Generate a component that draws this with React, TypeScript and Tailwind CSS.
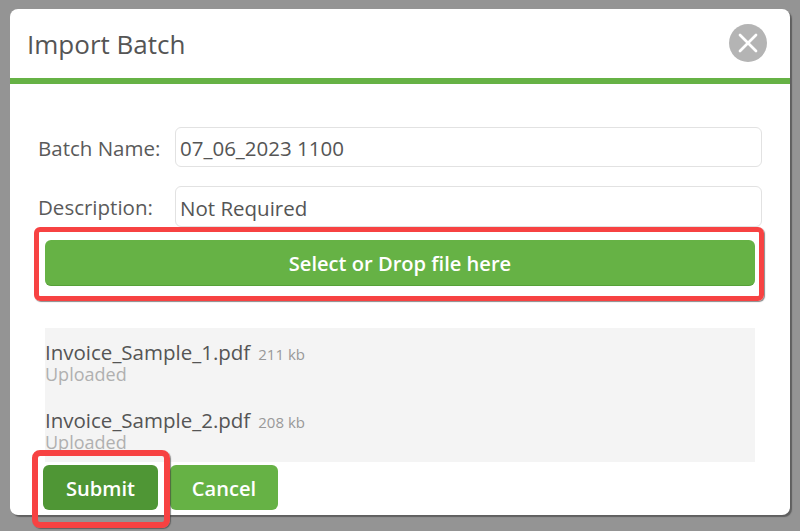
import { X } from "lucide-react";

const files = [
  { name: "Invoice_Sample_1.pdf", size: "211 kb" },
  { name: "Invoice_Sample_2.pdf", size: "208 kb" },
];

const fields = [
  { label: "Batch Name:", value: "07_06_2023 1100", height: "h-[40px]" },
  { label: "Description:", value: "Not Required", height: "h-[41px]" },
];

export default function App() {
  return (
    <main className="relative h-[531px] w-[800px] overflow-hidden bg-[#949494] px-[10px] pt-[9px] font-['Open_Sans',sans-serif] text-[#555555]">
      <div className="h-[506px] w-[780px] rounded-lg bg-white shadow-[2px_2px_1px_rgba(60,60,60,0.6)]">
        {/* header */}
        <header className="flex h-[75px] items-center justify-between border-b-[6px] border-[#66b245] pb-[2px] pl-[17px] pr-[23px]">
          <h1 className="pt-[2px] text-[26px] leading-none text-[#555555]">Import Batch</h1>
          <button className="flex h-[38px] w-[38px] items-center justify-center rounded-full bg-[#b4b4b4] text-white">
            <X size={32} strokeWidth={2} />
          </button>
        </header>

        {/* form */}
        <div className="flex flex-col gap-[19px] pl-[28px] pr-[28px] pt-[43px]">
          {fields.map((f) => (
            <div key={f.label} className="flex items-center">
              <label className="w-[137px] pt-[2px] text-[20.5px] text-[#5a5a5a]">{f.label}</label>
              <input
                readOnly
                value={f.value}
                className={`${f.height} w-[587px] rounded-md border border-[#e2e2e2] bg-white px-1 pt-[2px] text-[20.5px] text-[#555555] outline-none`}
              />
            </div>
          ))}
        </div>

        <div className="px-[35px] pt-[13px]">
          <button className="h-[46px] w-full rounded-md border-b border-[#56a038] bg-[#66b245] pt-[3px] text-[20.1px] font-[550] text-white">
            Select or Drop file here
          </button>

          {/* uploaded files */}
          <ul className="mt-[42px] h-[134px] overflow-hidden bg-[#f4f4f4] pt-[13px]">
            {files.map((f) => (
              <li key={f.name} className="mb-[26px]">
                <div className="flex items-baseline gap-[8px] leading-[23px]">
                  <span className="text-[20.5px] text-[#555555]">{f.name}</span>
                  <span className="text-[15px] text-[#999999]">{f.size}</span>
                </div>
                <div className="text-[18px] leading-[17px] text-[#b0b0b0]">Uploaded</div>
              </li>
            ))}
          </ul>
        </div>

        <div className="flex gap-[12px] pl-[33px] pt-[3px]">
          <button className="h-[45px] w-[115px] rounded-md bg-[#4f9635] pt-[4px] text-[20.1px] font-[550] text-white">Submit</button>
          <button className="h-[45px] w-[108px] rounded-md bg-[#66b245] pt-[4px] text-[20.1px] font-[550] text-white">Cancel</button>
        </div>
      </div>

      {/* red annotation boxes */}
      <div className="absolute left-[34px] top-[227px] h-[74px] w-[730px] rounded-md border-[5px] border-[#f74242] shadow-[1px_1px_1px_rgba(60,60,60,0.6)]" />
      <div className="absolute left-[32px] top-[450px] h-[78px] w-[138px] rounded-lg border-[6px] border-[#f74242] shadow-[1px_1px_1px_rgba(60,60,60,0.6)]" />
    </main>
  );
}
